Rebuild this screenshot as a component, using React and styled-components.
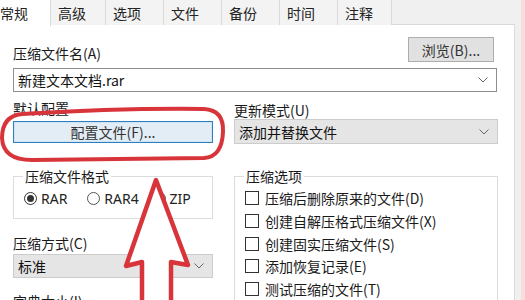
import React from 'react';
import styled, { createGlobalStyle } from 'styled-components';

const GlobalStyle = createGlobalStyle`
  html, body {
    margin: 0;
    padding: 0;
    background: #f0f0f0;
  }
  body {
    font-family: "Noto Sans CJK SC", "Microsoft YaHei", sans-serif;
    font-size: 14px;
    color: #1a1a1a;
  }
`;

const Screen = styled.div`
  position: relative;
  width: 525px;
  height: 300px;
  overflow: hidden;
  display: flex;
  background: #f0f0f0;
`;

const Dialog = styled.div`
  width: 515px;
  display: flex;
  flex-direction: column;
`;

const Edge = styled.div`
  width: 10px;
  display: flex;
  justify-content: flex-end;
`;

const PinkLine = styled.div`
  width: 4px;
  background: #f7dede;
`;

const TabBar = styled.div`
  height: 25px;
  display: flex;
  border-bottom: 1px solid #dadada;
  box-sizing: border-box;
`;

const Tab = styled.div`
  width: ${p => p.$w}px;
  height: ${p => (p.$active ? 26 : 25)}px;
  box-sizing: border-box;
  padding-left: ${p => (p.$active ? 0 : 7)}px;
  display: flex;
  align-items: center;
  background: ${p => (p.$active ? '#ffffff' : '#f3f3f3')};
  border-right: 1px solid #d9d9d9;
  font-size: 14px;
  color: #222;
  z-index: ${p => (p.$active ? 1 : 0)};
`;

const Panel = styled.div`
  flex: 1;
  background: #fff;
  border-right: 1px solid #dcdcdc;
  padding: 12px 17px 0 13px;
`;

const HeadRow = styled.div`
  display: flex;
  justify-content: space-between;
  align-items: flex-end;
  height: 25px;
`;

const Label = styled.div`
  font-size: 14px;
  line-height: 17px;
  color: #1a1a1a;
  margin-top: ${p => p.$mt || 0}px;
`;

const Button = styled.div`
  box-sizing: border-box;
  width: ${p => p.$w ? `${p.$w}px` : 'auto'};
  height: ${p => p.$h || 25}px;
  margin-right: ${p => p.$mr || 0}px;
  margin-top: ${p => p.$mt || 0}px;
  display: flex;
  align-items: center;
  justify-content: center;
  background: ${p => (p.$focus ? '#e3edf5' : '#e1e1e1')};
  border: 1px solid ${p => (p.$focus ? '#2b7fc4' : '#adadad')};
  box-shadow: ${p => (p.$focus ? 'inset 0 0 0 1px #cfe3f3' : 'none')};
  font-size: 14px;
  color: #333;
`;

const Combo = styled.div`
  box-sizing: border-box;
  height: ${p => p.$h || 24}px;
  margin-top: ${p => p.$mt || 0}px;
  display: flex;
  align-items: center;
  justify-content: space-between;
  padding: 0 8px 0 4px;
  background: ${p => (p.$edit ? '#fff' : '#e5e5e5')};
  border: 1px solid ${p => (p.$edit ? '#8e8e8e' : '#cccccc')};
  font-size: 14px;
  color: #111;
`;

const Columns = styled.div`
  display: grid;
  grid-template-columns: 200px 264px;
  column-gap: 21px;
`;

const Column = styled.div`
  display: flex;
  flex-direction: column;
`;

const Group = styled.fieldset`
  margin: ${p => p.$mt || 0}px 0 0 0;
  padding: 0 10px 0 10px;
  border: 1px solid #dcdcdc;
  height: ${p => p.$h}px;
  box-sizing: border-box;
  min-width: 0;
`;

const Legend = styled.legend`
  padding: 0 2px;
  margin-left: -1px;
  font-size: 14px;
  line-height: 17px;
  color: #1a1a1a;
`;

const RadioRow = styled.div`
  display: flex;
  align-items: center;
  margin-top: 3px;
  height: 20px;
`;

const RadioItem = styled.div`
  display: flex;
  align-items: center;
  gap: 4px;
  width: ${p => p.$w}px;
  font-family: "Noto Sans", "Noto Sans CJK SC", sans-serif;
  font-size: 14px;
  color: #222;
`;

const RadioDot = styled.span`
  width: 13px;
  height: 13px;
  box-sizing: border-box;
  border-radius: 50%;
  border: 1px solid ${p => (p.$on ? '#333' : '#555')};
  display: flex;
  align-items: center;
  justify-content: center;
  &::after {
    content: '';
    width: 7px;
    height: 7px;
    border-radius: 50%;
    background: ${p => (p.$on ? '#333' : 'transparent')};
  }
`;

const CheckList = styled.div`
  display: flex;
  flex-direction: column;
  margin-top: 2px;
`;

const CheckRow = styled.div`
  height: 22.7px;
  display: flex;
  align-items: center;
  gap: 6px;
  font-size: 14px;
  color: #1a1a1a;
  white-space: nowrap;
`;

const Box = styled.span`
  width: 14px;
  height: 14px;
  box-sizing: border-box;
  border: 1px solid #333;
  flex: none;
`;

const Overlay = styled.svg`
  position: absolute;
  left: 0;
  top: 0;
  pointer-events: none;
`;

const Chevron = () => (
  <svg width="10" height="6" viewBox="0 0 10 6">
    <polyline points="0.5,0.5 5,5 9.5,0.5" fill="none" stroke="#666" strokeWidth="1" />
  </svg>
);

const tabs = [
  { t: '常规', w: 51, active: true },
  { t: '高级', w: 55 },
  { t: '选项', w: 58 },
  { t: '文件', w: 58 },
  { t: '备份', w: 58 },
  { t: '时间', w: 58 },
  { t: '注释', w: 54 },
];

const options = [
  '压缩后删除原来的文件(D)',
  '创建自解压格式压缩文件(X)',
  '创建固实压缩文件(S)',
  '添加恢复记录(E)',
  '测试压缩的文件(T)',
];

export default function App() {
  return (
    <>
      <GlobalStyle />
      <Screen>
        <Dialog>
          <TabBar>
            {tabs.map(tab => (
              <Tab key={tab.t} $w={tab.w} $active={tab.active}>{tab.t}</Tab>
            ))}
          </TabBar>
          <Panel>
            <HeadRow>
              <Label>压缩文件名(A)</Label>
              <Button $w={86} $mr={3}>浏览(B)...</Button>
            </HeadRow>
            <Combo $edit $mt={6}>
              <span>新建文本文档.rar</span>
              <Chevron />
            </Combo>
            <Columns>
              <Column>
                <Label $mt={8}>默认配置</Label>
                <Button $focus $h={22} $mt={4}>配置文件(F)...</Button>
                <Group $mt={25} $h={51}>
                  <Legend>压缩文件格式</Legend>
                  <RadioRow>
                    <RadioItem $w={64}><RadioDot $on />RAR</RadioItem>
                    <RadioItem $w={66}><RadioDot />RAR4</RadioItem>
                    <RadioItem $w={50}><RadioDot />ZIP</RadioItem>
                  </RadioRow>
                </Group>
                <Label $mt={16}>压缩方式(C)</Label>
                <Combo $mt={2}>
                  <span>标准</span>
                  <Chevron />
                </Combo>
                <Label $mt={15}>字典大小(I)</Label>
              </Column>
              <Column>
                <Label $mt={10}>更新模式(U)</Label>
                <Combo $h={25} $mt={0}>
                  <span>添加并替换文件</span>
                  <Chevron />
                </Combo>
                <Group $mt={24} $h={160}>
                  <Legend>压缩选项</Legend>
                  <CheckList>
                    {options.map(o => (
                      <CheckRow key={o}><Box />{o}</CheckRow>
                    ))}
                  </CheckList>
                </Group>
              </Column>
            </Columns>
          </Panel>
        </Dialog>
        <Edge><PinkLine /></Edge>
        <Overlay width="525" height="300" viewBox="0 0 525 300">
          <path
            d="M 22 114 Q 120 108 204 109 Q 224 110 223 132 Q 222 157 204 158 L 32 160 Q 3 160 2 138 Q 2 116 22 114 Z"
            fill="none"
            stroke="#d8353b"
            strokeWidth="4"
            strokeLinejoin="round"
          />
          <path
            d="M 156 180 L 188 265 L 171 262 L 171 306 L 142 306 L 142 262 L 126 266 Z"
            fill="#ffffff"
            stroke="#d8353b"
            strokeWidth="4.5"
            strokeLinejoin="round"
          />
        </Overlay>
      </Screen>
    </>
  );
}
